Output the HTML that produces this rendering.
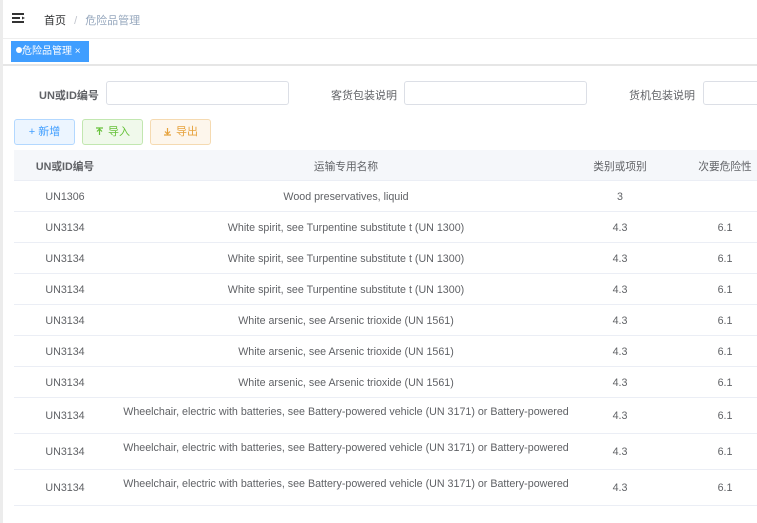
<!DOCTYPE html>
<html><head><meta charset="utf-8"><style>
*{margin:0;padding:0;box-sizing:border-box}
body{width:757px;height:523px;overflow:hidden;background:#fff;font-family:"Liberation Sans","Noto Sans CJK SC",sans-serif;color:#606266;position:relative}
.a{position:absolute}
.inp{position:absolute;height:24px;border:1px solid #dcdfe6;border-radius:3px;background:#fff}
.lbl{position:absolute;font-size:11px;font-weight:bold;color:#606266}
.btn{position:absolute;top:119px;height:26px;width:61px;border-radius:3px;font-size:11px;text-align:center;line-height:24px}
.btn svg{vertical-align:-1px;margin-right:4px}
.row{position:absolute;left:14px;width:743px;border-bottom:1px solid #ebeef5;font-size:10.7px;color:#606266}
.row span{position:absolute;text-align:center;white-space:nowrap}
.c1{left:0;width:102px}.c2{left:102px;width:460px}.c3{left:562px;width:88px}.c4{left:670px;width:82px}
</style></head><body>
<div class="a" style="left:0;top:0;width:3px;height:523px;background:#ececec"></div>
<svg class="a" style="left:12px;top:13px" width="14" height="12" viewBox="0 0 14 12"><rect x="0" y="0" width="12" height="2" fill="#333"/><rect x="0" y="4" width="8" height="2" fill="#333"/><rect x="0" y="8" width="12" height="2" fill="#333"/><path d="M10 3.5 L13 5 L10 6.5Z" fill="#333"/></svg>
<div class="a" style="left:44px;top:12px;font-size:11px;color:#303133">首页 <span style="color:#c0c4cc;margin:0 5px">/</span> <span style="color:#97a8be">危险品管理</span></div>
<div class="a" style="left:3px;top:38px;width:754px;height:1px;background:#eee"></div>
<div class="a" style="left:3px;top:64px;width:754px;height:2px;background:#e6e6e6"></div>
<div class="a" style="left:11px;top:41px;width:78px;height:21px;background:#409eff;border:1px solid #409eff;color:#fff;font-size:10px;line-height:19px;padding-left:4px">
<span style="display:inline-block;width:6px;height:6px;border-radius:50%;background:#fff;vertical-align:1px"></span>危险品管理 ×</div>
<div class="lbl" style="left:39px;top:87px">UN或ID编号</div>
<div class="inp" style="left:106px;top:81px;width:183px"></div>
<div class="lbl" style="left:331px;top:87px;font-weight:normal">客货包装说明</div>
<div class="inp" style="left:404px;top:81px;width:183px"></div>
<div class="lbl" style="left:629px;top:87px;font-weight:normal">货机包装说明</div>
<div class="inp" style="left:703px;top:81px;width:60px"></div>
<div class="btn" style="left:14px;background:#ecf5ff;border:1px solid #b3d8ff;color:#409eff">+ 新增</div>
<div class="btn" style="left:82px;background:#f0f9eb;border:1px solid #c2e7b0;color:#67c23a"><svg width="9" height="9" viewBox="0 0 9 9"><path d="M4.5 8V2M2 4.5L4.5 2L7 4.5M1 1H8" stroke="#67c23a" fill="none" stroke-width="1.2"/></svg>导入</div>
<div class="btn" style="left:150px;background:#fdf6ec;border:1px solid #f5dab1;color:#e6a23c"><svg width="9" height="9" viewBox="0 0 9 9"><path d="M4.5 1V7M2 4.5L4.5 7L7 4.5M1 8H8" stroke="#e6a23c" fill="none" stroke-width="1.2"/></svg>导出</div>
<div class="row" style="top:150px;height:31px;background:#f5f7fa;font-weight:bold"><span class="c1" style="top:9px">UN或ID编号</span><span class="c2" style="top:9px;font-weight:normal">运输专用名称</span><span class="c3" style="top:9px;font-weight:normal">类别或项别</span><span class="c4" style="top:9px;font-weight:normal">次要危险性</span></div>
<div class="row" style="top:181px;height:31px"><span class="c1" style="top:10px">UN1306</span><span class="c2" style="top:10px">Wood preservatives, liquid</span><span class="c3" style="top:10px">3</span></div>
<div class="row" style="top:212px;height:31px"><span class="c1" style="top:10px">UN3134</span><span class="c2" style="top:10px">White spirit, see Turpentine substitute t (UN 1300)</span><span class="c3" style="top:10px">4.3</span><span class="c4" style="top:10px">6.1</span></div>
<div class="row" style="top:243px;height:31px"><span class="c1" style="top:10px">UN3134</span><span class="c2" style="top:10px">White spirit, see Turpentine substitute t (UN 1300)</span><span class="c3" style="top:10px">4.3</span><span class="c4" style="top:10px">6.1</span></div>
<div class="row" style="top:274px;height:31px"><span class="c1" style="top:10px">UN3134</span><span class="c2" style="top:10px">White spirit, see Turpentine substitute t (UN 1300)</span><span class="c3" style="top:10px">4.3</span><span class="c4" style="top:10px">6.1</span></div>
<div class="row" style="top:305px;height:31px"><span class="c1" style="top:10px">UN3134</span><span class="c2" style="top:10px">White arsenic, see Arsenic trioxide (UN 1561)</span><span class="c3" style="top:10px">4.3</span><span class="c4" style="top:10px">6.1</span></div>
<div class="row" style="top:336px;height:31px"><span class="c1" style="top:10px">UN3134</span><span class="c2" style="top:10px">White arsenic, see Arsenic trioxide (UN 1561)</span><span class="c3" style="top:10px">4.3</span><span class="c4" style="top:10px">6.1</span></div>
<div class="row" style="top:367px;height:31px"><span class="c1" style="top:10px">UN3134</span><span class="c2" style="top:10px">White arsenic, see Arsenic trioxide (UN 1561)</span><span class="c3" style="top:10px">4.3</span><span class="c4" style="top:10px">6.1</span></div>
<div class="row" style="top:398px;height:36px"><span class="c1" style="top:12px">UN3134</span><span class="c2" style="top:8px">Wheelchair, electric with batteries, see Battery-powered vehicle (UN 3171) or Battery-powered</span><span class="c3" style="top:12px">4.3</span><span class="c4" style="top:12px">6.1</span></div>
<div class="row" style="top:434px;height:36px"><span class="c1" style="top:12px">UN3134</span><span class="c2" style="top:8px">Wheelchair, electric with batteries, see Battery-powered vehicle (UN 3171) or Battery-powered</span><span class="c3" style="top:12px">4.3</span><span class="c4" style="top:12px">6.1</span></div>
<div class="row" style="top:470px;height:36px"><span class="c1" style="top:12px">UN3134</span><span class="c2" style="top:8px">Wheelchair, electric with batteries, see Battery-powered vehicle (UN 3171) or Battery-powered</span><span class="c3" style="top:12px">4.3</span><span class="c4" style="top:12px">6.1</span></div>
</body></html>
